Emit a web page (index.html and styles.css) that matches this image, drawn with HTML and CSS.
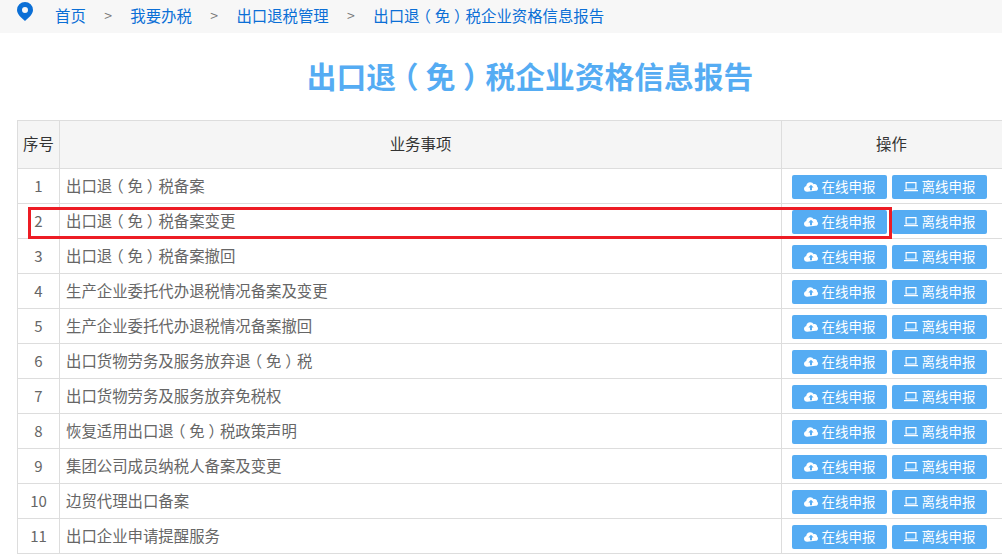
FILE: index.html
```html
<!DOCTYPE html>
<html lang="zh-CN">
<head>
<meta charset="utf-8">
<title>出口退（免）税企业资格信息报告</title>
<link rel="stylesheet" href="styles.css">
</head>
<body>
<svg class="defs" width="0" height="0" aria-hidden="true">
  <symbol id="cloud" viewBox="0 0 14 11"><path fill="#fff" d="M3.2 10.8C1.4 10.8 0 9.5 0 7.8c0-1.4.9-2.500 2.200-2.900C2.400 2.900 4.100 1.300 6.200 1.300c1.500 0 2.800.8 3.500 2 .3-.1.600-.2 1-.2 1.300 0 2.300 1 2.300 2.200v.2c.6.400 1 1.100 1 1.900 0 1.400-1.100 2.400-2.500 2.400z"/><path fill="#55acf3" d="M7 3.700 9.600 6.500H8v2.700H6V6.500H4.400z"/></symbol>
  <symbol id="laptop" viewBox="0 0 14 11"><path fill="#fff" fill-rule="evenodd" d="M1.500 1h11v7.600h-11zM2.700 2.200v5.200h8.600V2.200zM0 9h14v1.200H0z"/></symbol>
</svg>
<nav class="crumbs">
  <svg class="pin" viewBox="0 0 16 19" width="16" height="19"><path fill="#0b6fd6" fill-rule="evenodd" d="M8 0a8 8 0 0 1 8 8c0 4-4.500 8-8 11C4.500 16 0 12 0 8a8 8 0 0 1 8-8zm0 5a3 3 0 1 0 0 6 3 3 0 0 0 0-6z"/></svg>
  <a href="#">首页</a><span class="sep">&gt;</span>
  <a href="#">我要办税</a><span class="sep">&gt;</span>
  <a href="#">出口退税管理</a><span class="sep">&gt;</span>
  <a href="#">出口退<span class="paren">（</span>免<span class="paren">）</span>税企业资格信息报告</a>
</nav>
<h1 class="title">出口退<span class="paren">（</span>免<span class="paren">）</span>税企业资格信息报告</h1>
<div class="table-wrap">
<table class="biz">
  <colgroup><col class="c-no"><col class="c-name"><col class="c-op"></colgroup>
  <thead><tr><th>序号</th><th>业务事项</th><th class="th-op">操作</th></tr></thead>
  <tbody>
    <tr><td class="no">1</td><td>出口退<span class="paren">（</span>免<span class="paren">）</span>税备案</td><td class="ops"><a class="btn" href="#"><svg class="ico"><use href="#cloud"/></svg>在线申报</a><a class="btn" href="#"><svg class="ico"><use href="#laptop"/></svg>离线申报</a></td></tr>
    <tr><td class="no">2</td><td>出口退<span class="paren">（</span>免<span class="paren">）</span>税备案变更</td><td class="ops"><a class="btn" href="#"><svg class="ico"><use href="#cloud"/></svg>在线申报</a><a class="btn" href="#"><svg class="ico"><use href="#laptop"/></svg>离线申报</a></td></tr>
    <tr><td class="no">3</td><td>出口退<span class="paren">（</span>免<span class="paren">）</span>税备案撤回</td><td class="ops"><a class="btn" href="#"><svg class="ico"><use href="#cloud"/></svg>在线申报</a><a class="btn" href="#"><svg class="ico"><use href="#laptop"/></svg>离线申报</a></td></tr>
    <tr><td class="no">4</td><td>生产企业委托代办退税情况备案及变更</td><td class="ops"><a class="btn" href="#"><svg class="ico"><use href="#cloud"/></svg>在线申报</a><a class="btn" href="#"><svg class="ico"><use href="#laptop"/></svg>离线申报</a></td></tr>
    <tr><td class="no">5</td><td>生产企业委托代办退税情况备案撤回</td><td class="ops"><a class="btn" href="#"><svg class="ico"><use href="#cloud"/></svg>在线申报</a><a class="btn" href="#"><svg class="ico"><use href="#laptop"/></svg>离线申报</a></td></tr>
    <tr><td class="no">6</td><td>出口货物劳务及服务放弃退<span class="paren">（</span>免<span class="paren">）</span>税</td><td class="ops"><a class="btn" href="#"><svg class="ico"><use href="#cloud"/></svg>在线申报</a><a class="btn" href="#"><svg class="ico"><use href="#laptop"/></svg>离线申报</a></td></tr>
    <tr><td class="no">7</td><td>出口货物劳务及服务放弃免税权</td><td class="ops"><a class="btn" href="#"><svg class="ico"><use href="#cloud"/></svg>在线申报</a><a class="btn" href="#"><svg class="ico"><use href="#laptop"/></svg>离线申报</a></td></tr>
    <tr><td class="no">8</td><td>恢复适用出口退<span class="paren">（</span>免<span class="paren">）</span>税政策声明</td><td class="ops"><a class="btn" href="#"><svg class="ico"><use href="#cloud"/></svg>在线申报</a><a class="btn" href="#"><svg class="ico"><use href="#laptop"/></svg>离线申报</a></td></tr>
    <tr><td class="no">9</td><td>集团公司成员纳税人备案及变更</td><td class="ops"><a class="btn" href="#"><svg class="ico"><use href="#cloud"/></svg>在线申报</a><a class="btn" href="#"><svg class="ico"><use href="#laptop"/></svg>离线申报</a></td></tr>
    <tr><td class="no">10</td><td>边贸代理出口备案</td><td class="ops"><a class="btn" href="#"><svg class="ico"><use href="#cloud"/></svg>在线申报</a><a class="btn" href="#"><svg class="ico"><use href="#laptop"/></svg>离线申报</a></td></tr>
    <tr><td class="no">11</td><td>出口企业申请提醒服务</td><td class="ops"><a class="btn" href="#"><svg class="ico"><use href="#cloud"/></svg>在线申报</a><a class="btn" href="#"><svg class="ico"><use href="#laptop"/></svg>离线申报</a></td></tr>
  </tbody>
</table>
<div class="highlight"></div>
</div>
</body>
</html>
```
FILE: styles.css
```css
* { box-sizing: border-box; }
html, body { margin: 0; height: 100%; overflow: hidden; background: #fff; }
body { font-family: "Noto Sans CJK SC", "Liberation Sans", sans-serif; color: #666; }
.defs { position: absolute; }
a { text-decoration: none; }
.paren { font-feature-settings: "halt"; margin: 0 .25em; }

.crumbs {
  height: 33px;
  background: #f7f7f7;
  display: flex;
  align-items: center;
  padding-left: 17px;
  padding-bottom: 2px;
  font-size: 15.4px;
  line-height: 31px;
}
.crumbs a { color: #0b6fd6; }
.pin { margin-right: 22px; margin-top: -8px; flex: none; }
.sep { width: 44.5px; text-align: center; color: #777; font-size: 14px; }

.title {
  margin: 0;
  height: 87px;
  padding-top: 19px;
  padding-left: 58px;
  text-align: center;
  color: #55acf3;
  font-size: 29.75px;
  line-height: 46px;
  font-weight: 700;
}

.table-wrap { position: relative; margin-left: 17px; width: 987px; }
.biz { border-collapse: collapse; table-layout: fixed; width: 100%; font-size: 15.4px; }
.c-no { width: 42px; }
.c-name { width: 722px; }
.biz th, .biz td { border: 1px solid #ddd; padding: 0; }
.biz th {
  height: 48px;
  padding-bottom: 4px;
  background: #f5f5f5;
  color: #333;
  font-weight: 400;
  text-align: center;
}
.biz th.th-op { padding-right: 2px; }
.biz td { height: 35px; padding-left: 6px; padding-bottom: 2px; font-size: 15.4px; }
.biz td.no { padding-left: 0; text-align: center; font-size: 15px; }
.biz td.ops { padding-left: 10px; padding-top: 2px; padding-bottom: 0; font-size: 0; }
.btn {
  display: inline-flex;
  align-items: center;
  justify-content: center;
  width: 95px;
  height: 24px;
  margin-right: 5px;
  padding-bottom: 2px;
  background: #55acf3;
  border-radius: 2px;
  color: #fff;
  font-size: 13.5px;
  vertical-align: middle;
}
.ico { width: 14px; height: 11px; margin-right: 4px; }

.highlight {
  position: absolute;
  left: 11px;
  top: 87px;
  width: 864px;
  height: 32px;
  border: 3px solid #ed1c24;
  pointer-events: none;
}
```
